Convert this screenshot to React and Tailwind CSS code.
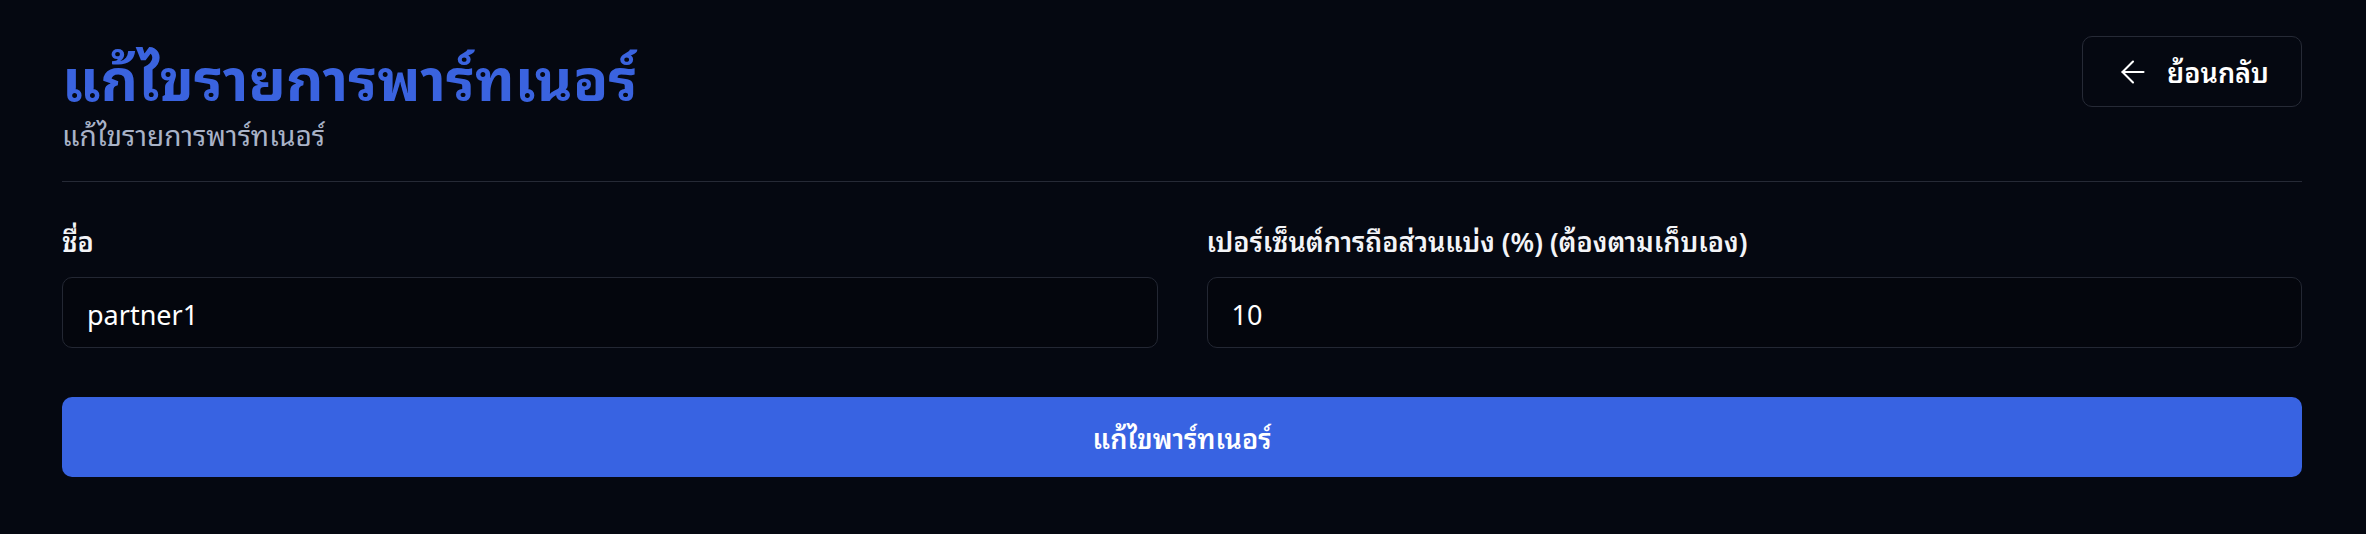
import React, { useState } from 'react';

const thai = { fontFamily: '"Noto Sans Thai Looped", "Noto Sans Thai", "Noto Sans", "Open Sans", sans-serif' };

const ArrowLeft = () => (
    <svg width="36" height="36" viewBox="0 0 24 24" fill="none" stroke="currentColor" strokeWidth="1.4" strokeLinecap="round" strokeLinejoin="round">
        <path d="M12 19l-7-7 7-7" />
        <path d="M19 12H5" />
    </svg>
);

const App = () => {
    const [form, setForm] = useState({ name: 'partner1', percent: '10' });
    const handleChange = (e) => setForm({ ...form, [e.target.name]: e.target.value });

    return (
        <div style={thai} className="min-h-screen bg-[#050811] pl-[62px] pr-[64px] pt-[36px] text-white">
            <div className="flex items-start justify-between border-b border-[#262a36] pb-[28px]">
                <div>
                    <h1 className="text-[58px] font-bold leading-[78px] text-[#3a63df]">แก้ไขรายการพาร์ทเนอร์</h1>
                    <p className="text-[28px] leading-[39px] text-[#a9b3c8]">แก้ไขรายการพาร์ทเนอร์</p>
                </div>
                <button className="flex h-[71px] w-[220px] items-center justify-center gap-[16px] rounded-[10px] border border-[#262a36] text-[27px] font-semibold text-white">
                    <ArrowLeft />
                    ย้อนกลับ
                </button>
            </div>

            <form className="pt-[40px]" onSubmit={(e) => e.preventDefault()}>
                <div className="grid grid-cols-2 gap-x-[49px]">
                    <div>
                        <label className="mb-[20px] block text-[27px] font-semibold leading-[1.3] text-[#f3f4f7]">ชื่อ</label>
                        <input name="name" value={form.name} onChange={handleChange} className="h-[71px] w-full rounded-[10px] border border-[#232733] bg-[#04060d] px-6 text-[27px] text-white outline-none" />
                    </div>
                    <div>
                        <label className="mb-[20px] block text-[27px] font-semibold leading-[1.3] text-[#f3f4f7]">เปอร์เซ็นต์การถือส่วนแบ่ง (%) (ต้องตามเก็บเอง)</label>
                        <input name="percent" value={form.percent} onChange={handleChange} className="h-[71px] w-full rounded-[10px] border border-[#232733] bg-[#04060d] px-6 text-[27px] text-white outline-none" />
                    </div>
                </div>
                <button type="submit" className="mt-[49px] flex h-[80px] w-full items-center justify-center rounded-[10px] bg-[#3863e2] text-[27px] font-semibold text-white">
                    แก้ไขพาร์ทเนอร์
                </button>
            </form>
        </div>
    );
};

export default App;
